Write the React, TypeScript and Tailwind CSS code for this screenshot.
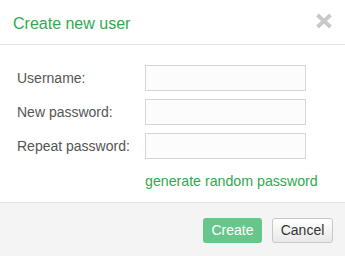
import React from "react";

const fields = ["Username:", "New password:", "Repeat password:"];

export default function App() {
  return (
    <div className="w-[345px] h-[256px] bg-white flex flex-col font-['Liberation_Sans',Arial,sans-serif]">
      <div className="h-[45px] flex items-center justify-between pl-[13px] pr-[12px] border-b border-[#e5e5e5]">
        <h3 className="text-[16px] text-[#2eaa4f] leading-none pt-[3px]">Create new user</h3>
        <button className="w-[18px] h-[16px] mb-[2px]">
          <svg viewBox="0 0 18 16" className="w-[18px] h-[16px]">
            <path d="M2.5 2 L15.5 14 M15.5 2 L2.5 14" stroke="#c9c9c9" strokeWidth="3.8" strokeLinecap="butt" />
          </svg>
        </button>
      </div>

      <div className="flex-1 pt-[20px] pl-[17px]">
        <div className="flex flex-col gap-[8px]">
          {fields.map((f) => (
            <div key={f} className="flex items-center">
              <label className="w-[128px] text-[14px] text-[#555]">{f}</label>
              <input className="w-[161px] h-[26px] border border-[#d6d6d6] bg-[#fcfcfc] outline-none" />
            </div>
          ))}
        </div>
        <div className="pl-[128px] pt-[10px]">
          <a href="#" className="text-[14.2px] text-[#2eaa4f] leading-[20px]">generate random password</a>
        </div>
      </div>

      <div className="h-[54px] border-t border-[#e0e0e0] bg-[#f4f4f4] flex items-center justify-end gap-[10px] pr-[12px] pt-[1px]">
        <button className="w-[59px] h-[25px] rounded-[3px] bg-[#66c68b] text-white text-[14px]">Create</button>
        <button className="w-[61px] h-[25px] rounded-[3px] border border-[#c8c8c8] bg-gradient-to-b from-white to-[#e8e8e8] text-[#333] text-[14px]">Cancel</button>
      </div>
    </div>
  );
}
